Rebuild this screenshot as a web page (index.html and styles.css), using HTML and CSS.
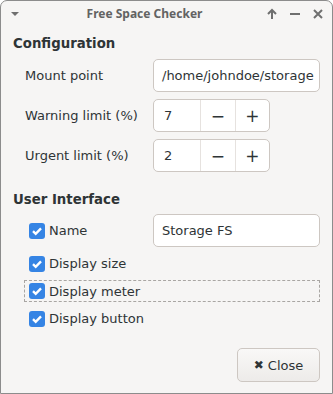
FILE: index.html
```html
<!DOCTYPE html>
<html lang="en">
<head>
    <meta charset="UTF-8">
    <title>Free Space Checker</title>
    <link rel="stylesheet" href="styles.css">
</head>
<body>
    <div class="window">
        <div class="titlebar">
            <span class="tb-menu">
                <svg width="10" height="6" viewBox="0 0 10 6"><path d="M1 1h8l-4 4z" fill="#6f6f6f"/></svg>
            </span>
            <span class="tb-title">Free Space Checker</span>
            <span class="tb-buttons">
                <svg width="12" height="12" viewBox="0 0 12 12"><path d="M6 11V2M2 6l4-4 4 4" stroke="#6f6f6f" stroke-width="2" fill="none"/></svg>
                <svg width="12" height="12" viewBox="0 0 12 12"><path d="M1 6h10" stroke="#6f6f6f" stroke-width="2"/></svg>
                <svg width="12" height="12" viewBox="0 0 12 12"><path d="M2 2l8 8M10 2l-8 8" stroke="#6f6f6f" stroke-width="2"/></svg>
            </span>
        </div>
        <div class="content">
            <div class="section-title">Configuration</div>
            <div class="rows">
                <div class="row">
                    <span class="label">Mount point</span>
                    <div class="entry">/home/johndoe/storage</div>
                </div>
                <div class="row">
                    <span class="label">Warning limit (%)</span>
                    <div class="spin">
                        <span class="spin-value">7</span>
                        <span class="spin-btn">&minus;</span>
                        <span class="spin-btn">+</span>
                    </div>
                </div>
                <div class="row">
                    <span class="label">Urgent limit (%)</span>
                    <div class="spin">
                        <span class="spin-value">2</span>
                        <span class="spin-btn">&minus;</span>
                        <span class="spin-btn">+</span>
                    </div>
                </div>
            </div>

            <div class="section-title ui-title">User Interface</div>
            <div class="checks">
                <div class="row name-row">
                    <span class="check-item"><span class="check"><svg width="16" height="16" viewBox="0 0 16 16"><path d="M4 8.2l2.7 2.6L12 5.4" stroke="#fff" stroke-width="2.4" fill="none"/></svg></span>Name</span>
                    <div class="entry">Storage FS</div>
                </div>
                <div class="check-item"><span class="check"><svg width="16" height="16" viewBox="0 0 16 16"><path d="M4 8.2l2.7 2.6L12 5.4" stroke="#fff" stroke-width="2.4" fill="none"/></svg></span>Display size</div>
                <div class="check-item focused"><span class="check"><svg width="16" height="16" viewBox="0 0 16 16"><path d="M4 8.2l2.7 2.6L12 5.4" stroke="#fff" stroke-width="2.4" fill="none"/></svg></span>Display meter</div>
                <div class="check-item"><span class="check"><svg width="16" height="16" viewBox="0 0 16 16"><path d="M4 8.2l2.7 2.6L12 5.4" stroke="#fff" stroke-width="2.4" fill="none"/></svg></span>Display button</div>
            </div>

            <div class="footer">
                <button class="close-btn"><span class="close-icon">&#10006;</span>Close</button>
            </div>
        </div>
    </div>
</body>
</html>
```

FILE: styles.css
```css
body {
    margin: 0;
    font-family: 'DejaVu Sans', sans-serif;
    font-size: 13px;
    color: #2e3436;
    background: #ffffff;
}
.window {
    width: 333px;
    height: 394px;
    box-sizing: border-box;
    border: 1px solid #8c8c8c;
    border-radius: 7px 7px 0 0;
    background-color: #f6f5f4;
    display: flex;
    flex-direction: column;
}
.titlebar {
    height: 25px;
    display: flex;
    align-items: center;
    position: relative;
    color: #636363;
}
.tb-menu {
    margin-left: 9px;
    display: flex;
}
.tb-title {
    position: absolute;
    left: 0;
    right: 0;
    text-align: center;
    font-family: 'Noto Sans', sans-serif;
    font-weight: bold;
    font-size: 12px;
    margin-left: -44px;
}
.tb-buttons {
    margin-left: auto;
    margin-right: 8px;
    display: flex;
    gap: 11px;
}
.content {
    flex: 1;
    display: flex;
    flex-direction: column;
    padding: 0 12px 11px 12px;
}
.section-title {
    font-weight: bold;
    font-size: 13.3px;
    margin-top: 10px;
    margin-bottom: 8px;
}
.ui-title {
    margin-top: 20px;
    margin-bottom: 7px;
}
.rows {
    display: flex;
    flex-direction: column;
    gap: 7px;
}
.row {
    display: flex;
    align-items: center;
    justify-content: space-between;
}
.label {
    padding-left: 12px;
}
.entry {
    width: 167px;
    height: 33px;
    box-sizing: border-box;
    border: 1px solid #cdc7c2;
    border-radius: 5px;
    background-color: #ffffff;
    padding: 0 8px;
    display: flex;
    align-items: center;
}
.spin {
    width: 117px;
    margin-right: 50px;
    height: 33px;
    box-sizing: border-box;
    border: 1px solid #cdc7c2;
    border-radius: 5px;
    background-color: #ffffff;
    display: flex;
}
.spin-value {
    width: 46px;
    box-sizing: border-box;
    padding-left: 10px;
    display: flex;
    align-items: center;
}
.spin-btn {
    flex: 1;
    border-left: 1px solid #e6e2df;
    display: flex;
    align-items: center;
    justify-content: center;
    font-size: 17px;
}
.checks {
    display: flex;
    flex-direction: column;
    gap: 5.5px;
}
.check-item {
    display: flex;
    align-items: center;
    gap: 4px;
    height: 22px;
    padding-left: 16px;
    box-sizing: border-box;
}
.check {
    width: 16px;
    height: 16px;
    border-radius: 3px;
    background-color: #3584e4;
    display: flex;
}
.focused {
    border: 1px dashed #a9a6a3;
    margin-left: 11px;
    padding-left: 4px;
}
.footer {
    margin-top: auto;
    display: flex;
    justify-content: flex-end;
}
.close-btn {
    width: 83px;
    height: 34px;
    border: 1px solid #cdc7c2;
    border-radius: 5px;
    background: linear-gradient(#f9f8f7, #edebe9);
    font-family: 'DejaVu Sans', sans-serif;
    font-size: 13px;
    color: #2e3436;
    display: flex;
    align-items: center;
    justify-content: center;
    gap: 4px;
}
.close-icon {
    font-size: 12px;
}
```
